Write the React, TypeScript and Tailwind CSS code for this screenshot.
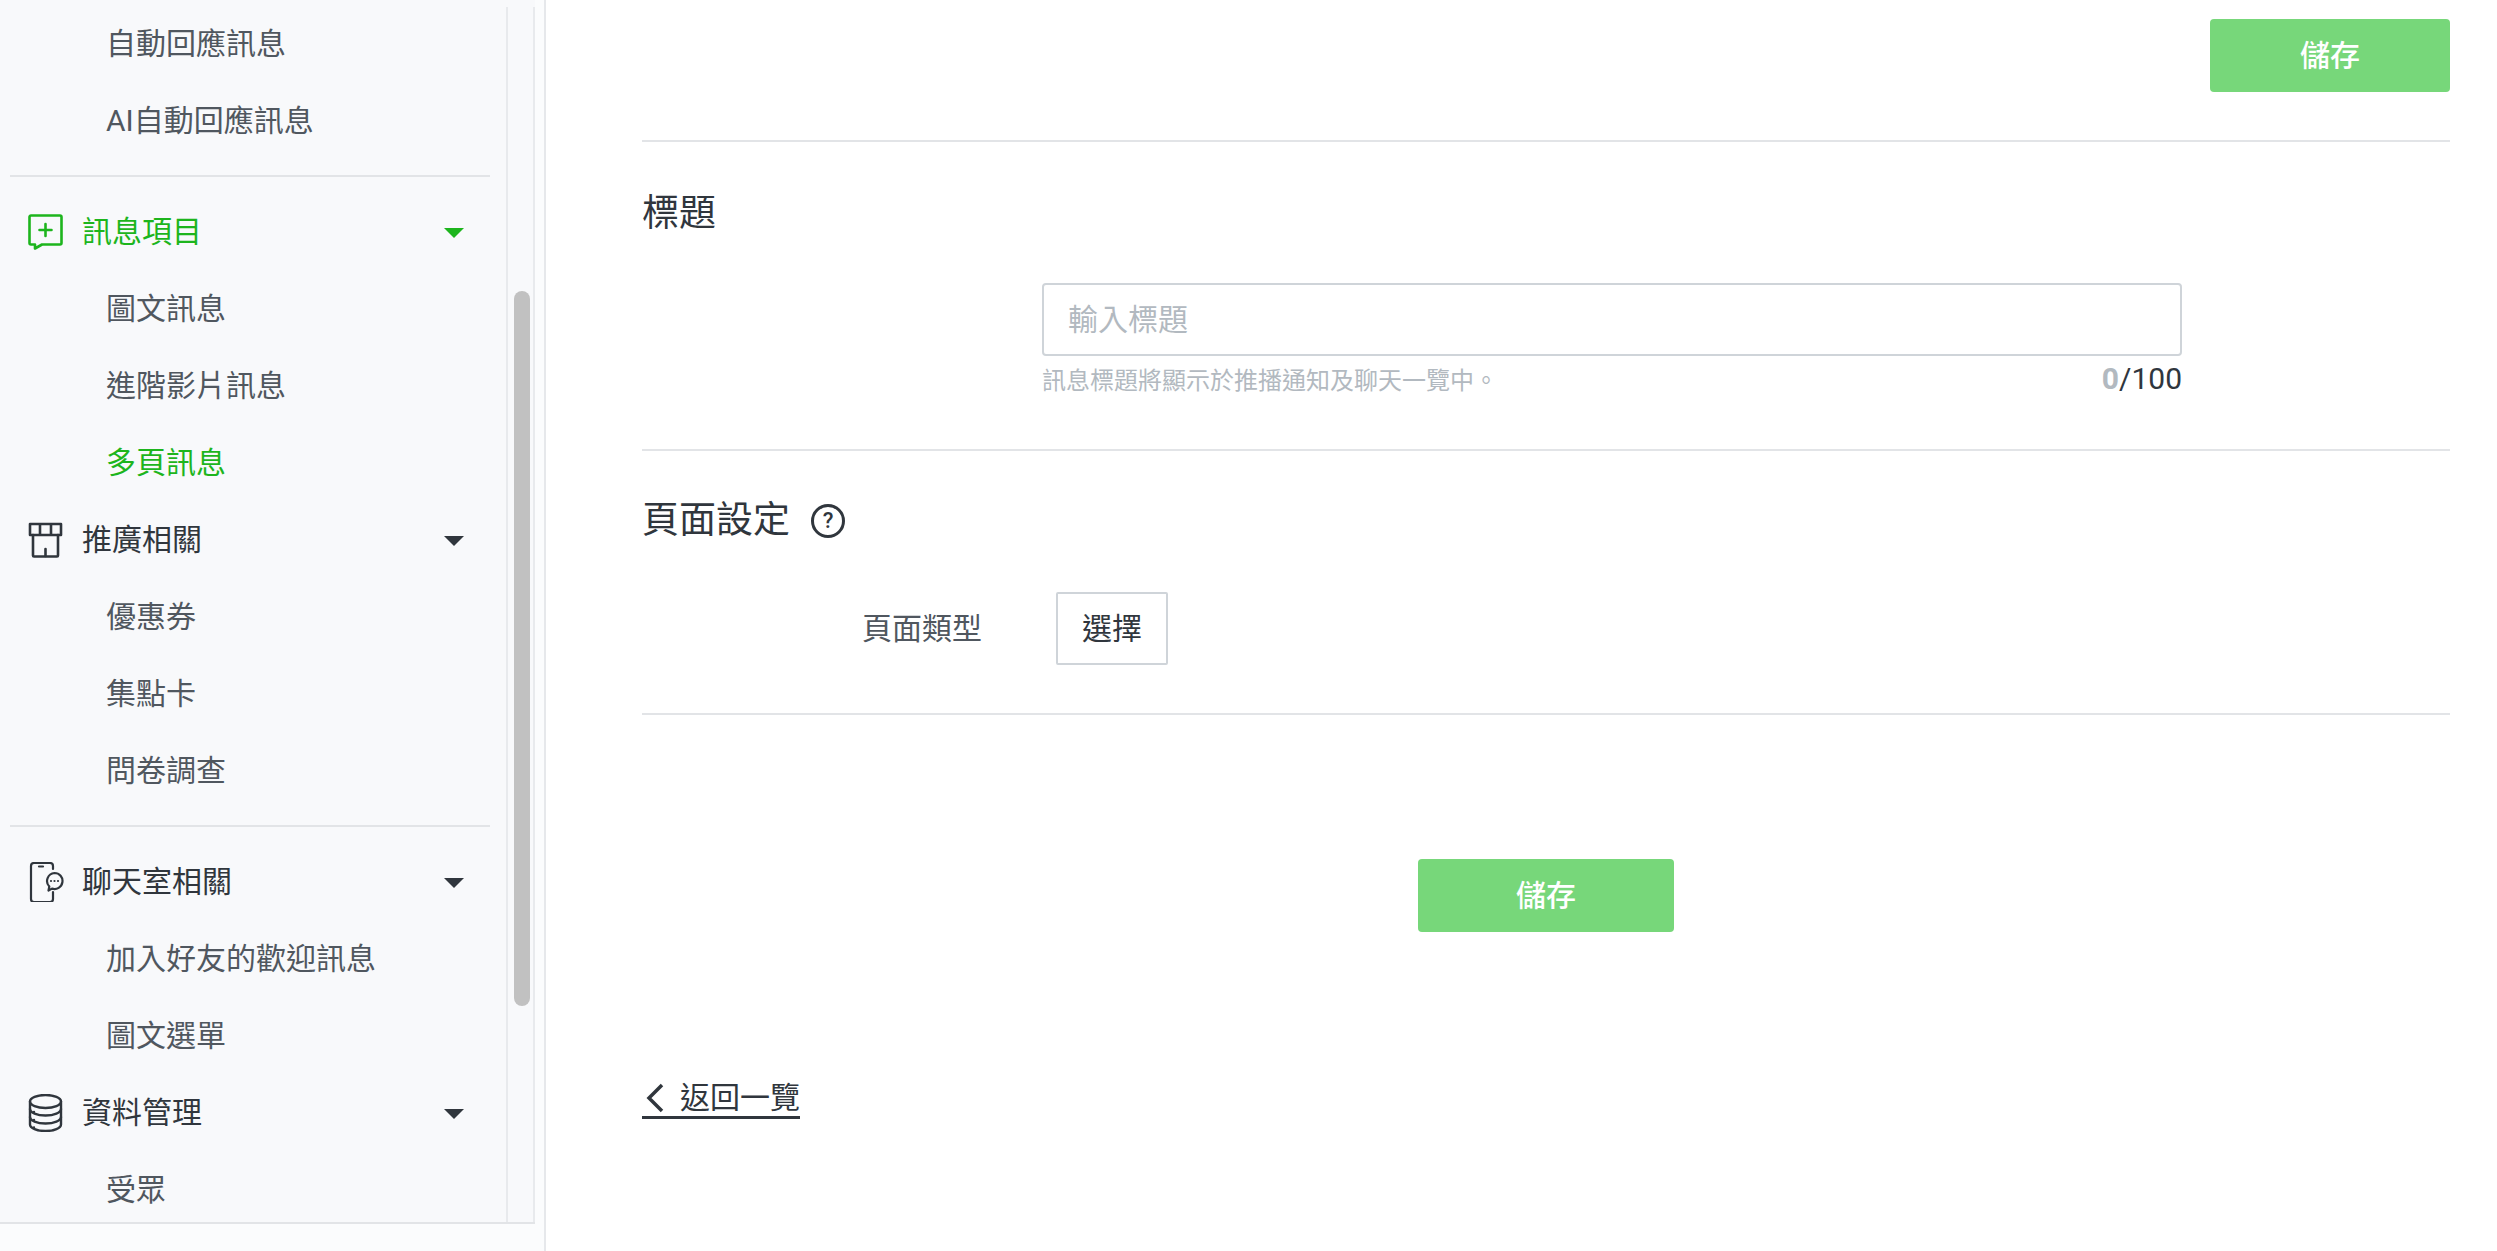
import React from "react";

const FONT = "font-['Roboto','Noto_Sans_CJK_TC',sans-serif]";

const ChatPlusIcon = () => (
  <svg width="35" height="36" viewBox="0 0 35 36" fill="none" stroke="currentColor" strokeWidth="2.6" strokeLinejoin="round" strokeLinecap="round">
    <path d="M3 1.500h29a1.500 1.500 0 0 1 1.500 1.500v26a1.500 1.500 0 0 1-1.500 1.500H14l-7 4v-4H3A1.500 1.500 0 0 1 1.500 29V3A1.500 1.500 0 0 1 3 1.500Z" />
    <path d="M17.500 10v12M11.500 16h12" />
  </svg>
);

const StoreIcon = () => (
  <svg width="35" height="36" viewBox="0 0 35 36" fill="none" stroke="currentColor" strokeWidth="2.6" strokeLinejoin="round" strokeLinecap="round">
    <path d="M2 2h31v11H2ZM12 2v11M23 2v11" />
    <path d="M5 13v20.500a1 1 0 0 0 1 1h23a1 1 0 0 0 1-1V13" />
    <path d="M17.500 27v7" />
  </svg>
);

const PhoneChatIcon = () => (
  <svg width="36" height="40" viewBox="0 0 36 40" fill="none" stroke="currentColor" strokeWidth="2.2" strokeLinejoin="round" strokeLinecap="round">
    <path d="M25 7V4a3 3 0 0 0-3-3H6a3 3 0 0 0-3 3v33a3 3 0 0 0 3 3h16a3 3 0 0 0 3-3v-7" />
    <path d="M11 4.500h4" />
    <path d="M26.500 11a8 8 0 1 1-2.500 15.600l-3.500 1.900.8-4A8 8 0 0 1 26.500 11Z" />
    <path d="M23 19h.01M26.500 19h.01M30 19h.01" />
  </svg>
);

const DatabaseIcon = () => (
  <svg width="35" height="38" viewBox="0 0 35 38" fill="none" stroke="currentColor" strokeWidth="2.400" strokeLinecap="round">
    <ellipse cx="17.500" cy="7.500" rx="15.500" ry="6.500" />
    <path d="M2 7.500v23c0 3.500 7 6.500 15.500 6.500S33 34 33 30.500v-23" />
    <path d="M2 15c0 3.500 7 6.500 15.500 6.500S33 18.500 33 15M2 23c0 3.500 7 6.500 15.500 6.500S33 26.500 33 23" />
    <path d="M6 18h.01M6 26h.01M6 33.500h.01" />
  </svg>
);

const Caret = () => (
  <span className="ml-auto mr-[42px] mt-[2px] h-0 w-0 border-x-[10px] border-t-[10px] border-x-transparent border-t-current" />
);

const SubItem = ({ label, active }: { label: string; active?: boolean }) => (
  <div className={`flex h-[77px] items-center pl-[106px] text-[30px] ${active ? "text-[#1db51d]" : "text-[#50575f]"}`}>
    {label}
  </div>
);

const Group = ({ icon, label, active }: { icon: React.ReactNode; label: string; active?: boolean }) => (
  <div className={`flex h-[77px] items-center pl-[28px] text-[30px] ${active ? "text-[#1db51d]" : "text-[#30363d]"}`}>
    <span className="flex w-[54px] shrink-0">{icon}</span>
    <span>{label}</span>
    <Caret />
  </div>
);

const Divider = () => <div className="ml-[10px] mr-[16px] my-[16px] h-[2px] bg-[#e2e4e7]" />;

const SaveButton = ({ className }: { className: string }) => (
  <button className={`h-[73px] rounded-[4px] bg-[#77d77a] text-[30px] font-medium text-white ${className}`}>儲存</button>
);

export default function App() {
  return (
    <div className={`flex h-[1251px] w-[2497px] overflow-hidden bg-white ${FONT}`}>
      {/* Sidebar */}
      <aside className="h-full w-[546px] shrink-0 border-r-2 border-[#e6e8eb] bg-[#fbfcfd]">
        <div className="flex h-[1224px] w-[535px] overflow-hidden border-b-2 border-[#e2e4e7] bg-[#f8f9fb]">
          <nav className="w-[506px] shrink-0 pt-[5px]">
            <SubItem label="自動回應訊息" />
            <SubItem label="AI自動回應訊息" />
            <Divider />
            <Group icon={<ChatPlusIcon />} label="訊息項目" active />
            <SubItem label="圖文訊息" />
            <SubItem label="進階影片訊息" />
            <SubItem label="多頁訊息" active />
            <Group icon={<StoreIcon />} label="推廣相關" />
            <SubItem label="優惠券" />
            <SubItem label="集點卡" />
            <SubItem label="問卷調查" />
            <Divider />
            <Group icon={<PhoneChatIcon />} label="聊天室相關" />
            <SubItem label="加入好友的歡迎訊息" />
            <SubItem label="圖文選單" />
            <Group icon={<DatabaseIcon />} label="資料管理" />
            <SubItem label="受眾" />
          </nav>
          {/* Scrollbar */}
          <div className="mt-[7px] flex-1 border-x-2 border-[#e8eaed] pl-[6px] pt-[284px]">
            <div className="h-[715px] w-[16px] rounded-full bg-[#c1c1c1]" />
          </div>
        </div>
      </aside>

      {/* Main */}
      <main className="flex-1 pl-[96px] pr-[47px] pt-[19px] text-[#30363d]">
        <div className="flex justify-end border-b-2 border-[#e2e4e7] pb-[48px]">
          <SaveButton className="w-[240px]" />
        </div>

        <section className="h-[309px] border-b-2 border-[#e2e4e7] pt-[45px]">
          <h2 className="h-[54px] text-[37px] leading-[54px]">標題</h2>
          <div className="ml-[400px] mt-[42px] w-[1140px]">
            <input
              readOnly
              placeholder="輸入標題"
              className="h-[73px] w-full rounded-[4px] border-2 border-[#cfd4d9] bg-white px-[24px] text-[30px] outline-none placeholder:text-[#b2b9c0]"
            />
            <div className="mt-[5px] flex items-start justify-between">
              <span className="mt-[3px] text-[24px] leading-[34px] text-[#b2b9c0]">訊息標題將顯示於推播通知及聊天一覽中。</span>
              <span className="text-[30px] leading-[36px]">
                <b className="font-bold text-[#b2b9c0]">0</b>/100
              </span>
            </div>
          </div>
        </section>

        <section className="h-[264px] border-b-2 border-[#e2e4e7] pt-[43px]">
          <div className="flex h-[54px] items-center">
            <h2 className="text-[37px] leading-[54px]">頁面設定</h2>
            <span className="ml-[21px] flex h-[34px] w-[34px] items-center justify-center rounded-full border-[3px] border-[#30363d] text-[22px] font-medium leading-none">?</span>
          </div>
          <div className="ml-[220px] mt-[44px] flex items-center">
            <span className="text-[30px] text-[#50575f]">頁面類型</span>
            <button className="ml-[74px] h-[73px] w-[112px] rounded-[2px] border-2 border-[#cfd4d9] bg-white text-[30px]">選擇</button>
          </div>
        </section>

        <div className="flex justify-center pt-[144px]">
          <SaveButton className="w-[256px]" />
        </div>

        <a className="mt-[148px] flex w-[158px] items-center border-b-[3px] border-[#30363d] text-[30px] leading-[36px]">
          <svg width="24" height="30" viewBox="0 0 24 30" fill="none" stroke="currentColor" strokeWidth="3.5" className="mr-[14px] shrink-0">
            <path d="M20 2 7 15l13 13" />
          </svg>
          返回一覽
        </a>
      </main>
    </div>
  );
}
